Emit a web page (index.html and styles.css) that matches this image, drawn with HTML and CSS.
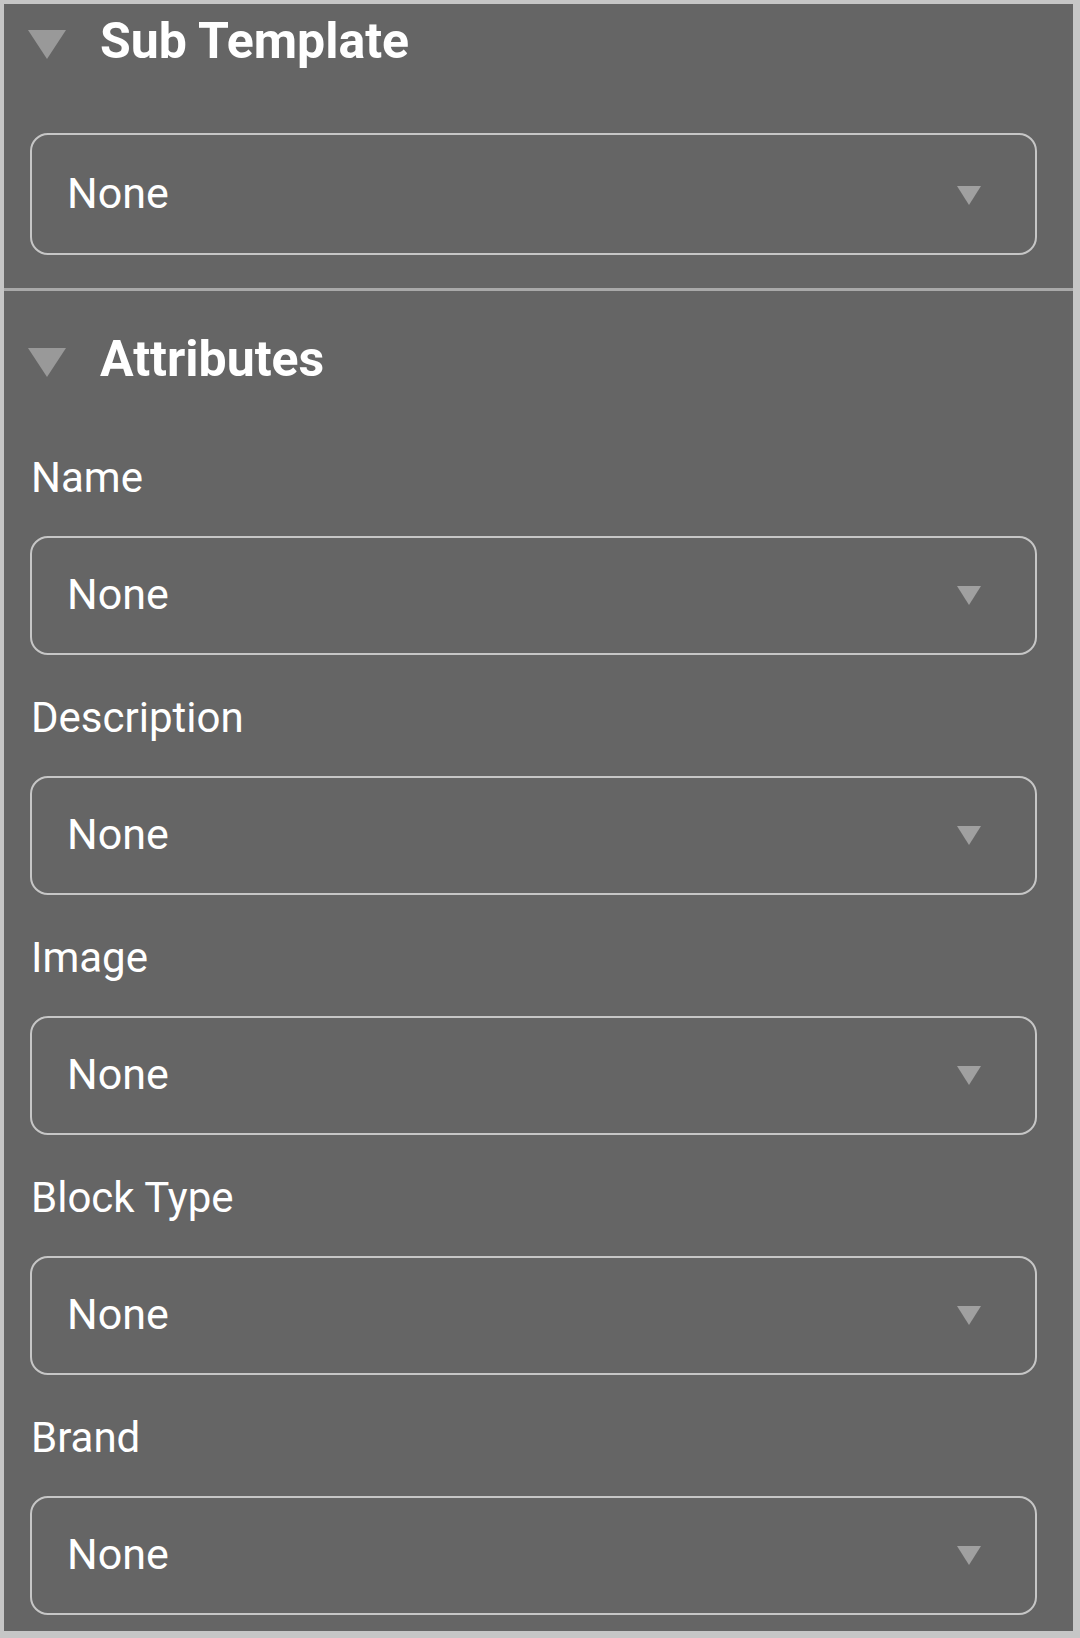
FILE: index.html
```html
<!DOCTYPE html>
<html>
<head>
<meta charset="utf-8">
<link rel="stylesheet" href="styles.css">
</head>
<body>
<div class="panel">
  <section class="section section-first">
    <div class="head">
      <svg class="head-tri" width="38" height="29" viewBox="0 0 38 29"><polygon points="0,0 38,0 19,29" fill="#999999"/></svg>
      <span class="head-title">Sub Template</span>
    </div>
    <div class="select select-tall"><span class="select-value">None</span><svg class="caret" width="24" height="19" viewBox="0 0 24 19"><polygon points="0,0 24,0 12,19" fill="#a0a0a0"/></svg></div>
  </section>
  <section class="section section-attrs">
    <div class="head">
      <svg class="head-tri" width="38" height="29" viewBox="0 0 38 29"><polygon points="0,0 38,0 19,29" fill="#999999"/></svg>
      <span class="head-title">Attributes</span>
    </div>
    <div class="fields">
      <div class="field">
        <div class="field-label">Name</div>
        <div class="select"><span class="select-value">None</span><svg class="caret" width="24" height="19" viewBox="0 0 24 19"><polygon points="0,0 24,0 12,19" fill="#a0a0a0"/></svg></div>
      </div>
      <div class="field">
        <div class="field-label">Description</div>
        <div class="select"><span class="select-value">None</span><svg class="caret" width="24" height="19" viewBox="0 0 24 19"><polygon points="0,0 24,0 12,19" fill="#a0a0a0"/></svg></div>
      </div>
      <div class="field">
        <div class="field-label">Image</div>
        <div class="select"><span class="select-value">None</span><svg class="caret" width="24" height="19" viewBox="0 0 24 19"><polygon points="0,0 24,0 12,19" fill="#a0a0a0"/></svg></div>
      </div>
      <div class="field">
        <div class="field-label">Block Type</div>
        <div class="select"><span class="select-value">None</span><svg class="caret" width="24" height="19" viewBox="0 0 24 19"><polygon points="0,0 24,0 12,19" fill="#a0a0a0"/></svg></div>
      </div>
      <div class="field">
        <div class="field-label">Brand</div>
        <div class="select"><span class="select-value">None</span><svg class="caret" width="24" height="19" viewBox="0 0 24 19"><polygon points="0,0 24,0 12,19" fill="#a0a0a0"/></svg></div>
      </div>
    </div>
  </section>
</div>
</body>
</html>
```

FILE: styles.css
```css
* { box-sizing: border-box; }
html, body {
  margin: 0;
  width: 1080px;
  height: 1638px;
  overflow: hidden;
}
body {
  background: #c6c6c6;
  padding: 4px 7px 7px 4px;
  font-family: Roboto, "Liberation Sans", sans-serif;
  color: #ffffff;
}
.panel {
  background: #656565;
  height: 100%;
  display: flex;
  flex-direction: column;
}
.section {
  padding: 0 36px 0 26px;
}
.section-first {
  padding-top: 7px;
  padding-bottom: 33px;
  border-bottom: 3px solid #a9a9a9;
}
.section-attrs {
  padding-top: 38px;
}
.head {
  display: flex;
  align-items: center;
  height: 60px;
}
.head-tri {
  margin-left: -2px;
  margin-top: 6px;
  flex: none;
}
.head-title {
  margin-left: 34px;
  font-size: 50px;
  font-weight: 700;
  line-height: 60px;
  white-space: nowrap;
}
.section-first .head { margin-bottom: 62px; }
.section-attrs .head { margin-bottom: 64px; }
.fields {
  display: flex;
  flex-direction: column;
  gap: 38px;
}
.field {
  display: flex;
  flex-direction: column;
}
.field-label {
  font-size: 42px;
  line-height: 50px;
  margin-bottom: 33px;
  padding-left: 1px;
}
.select {
  height: 119px;
  border: 2px solid #c6c6c6;
  border-radius: 18px;
  display: flex;
  align-items: center;
  justify-content: space-between;
  padding: 0 54px 4px 35px;
}
.select-tall {
  height: 122px;
  padding-bottom: 2px;
}
.select-value {
  font-size: 43px;
  line-height: 50px;
}
.caret {
  flex: none;
  margin-top: 4px;
}
```
